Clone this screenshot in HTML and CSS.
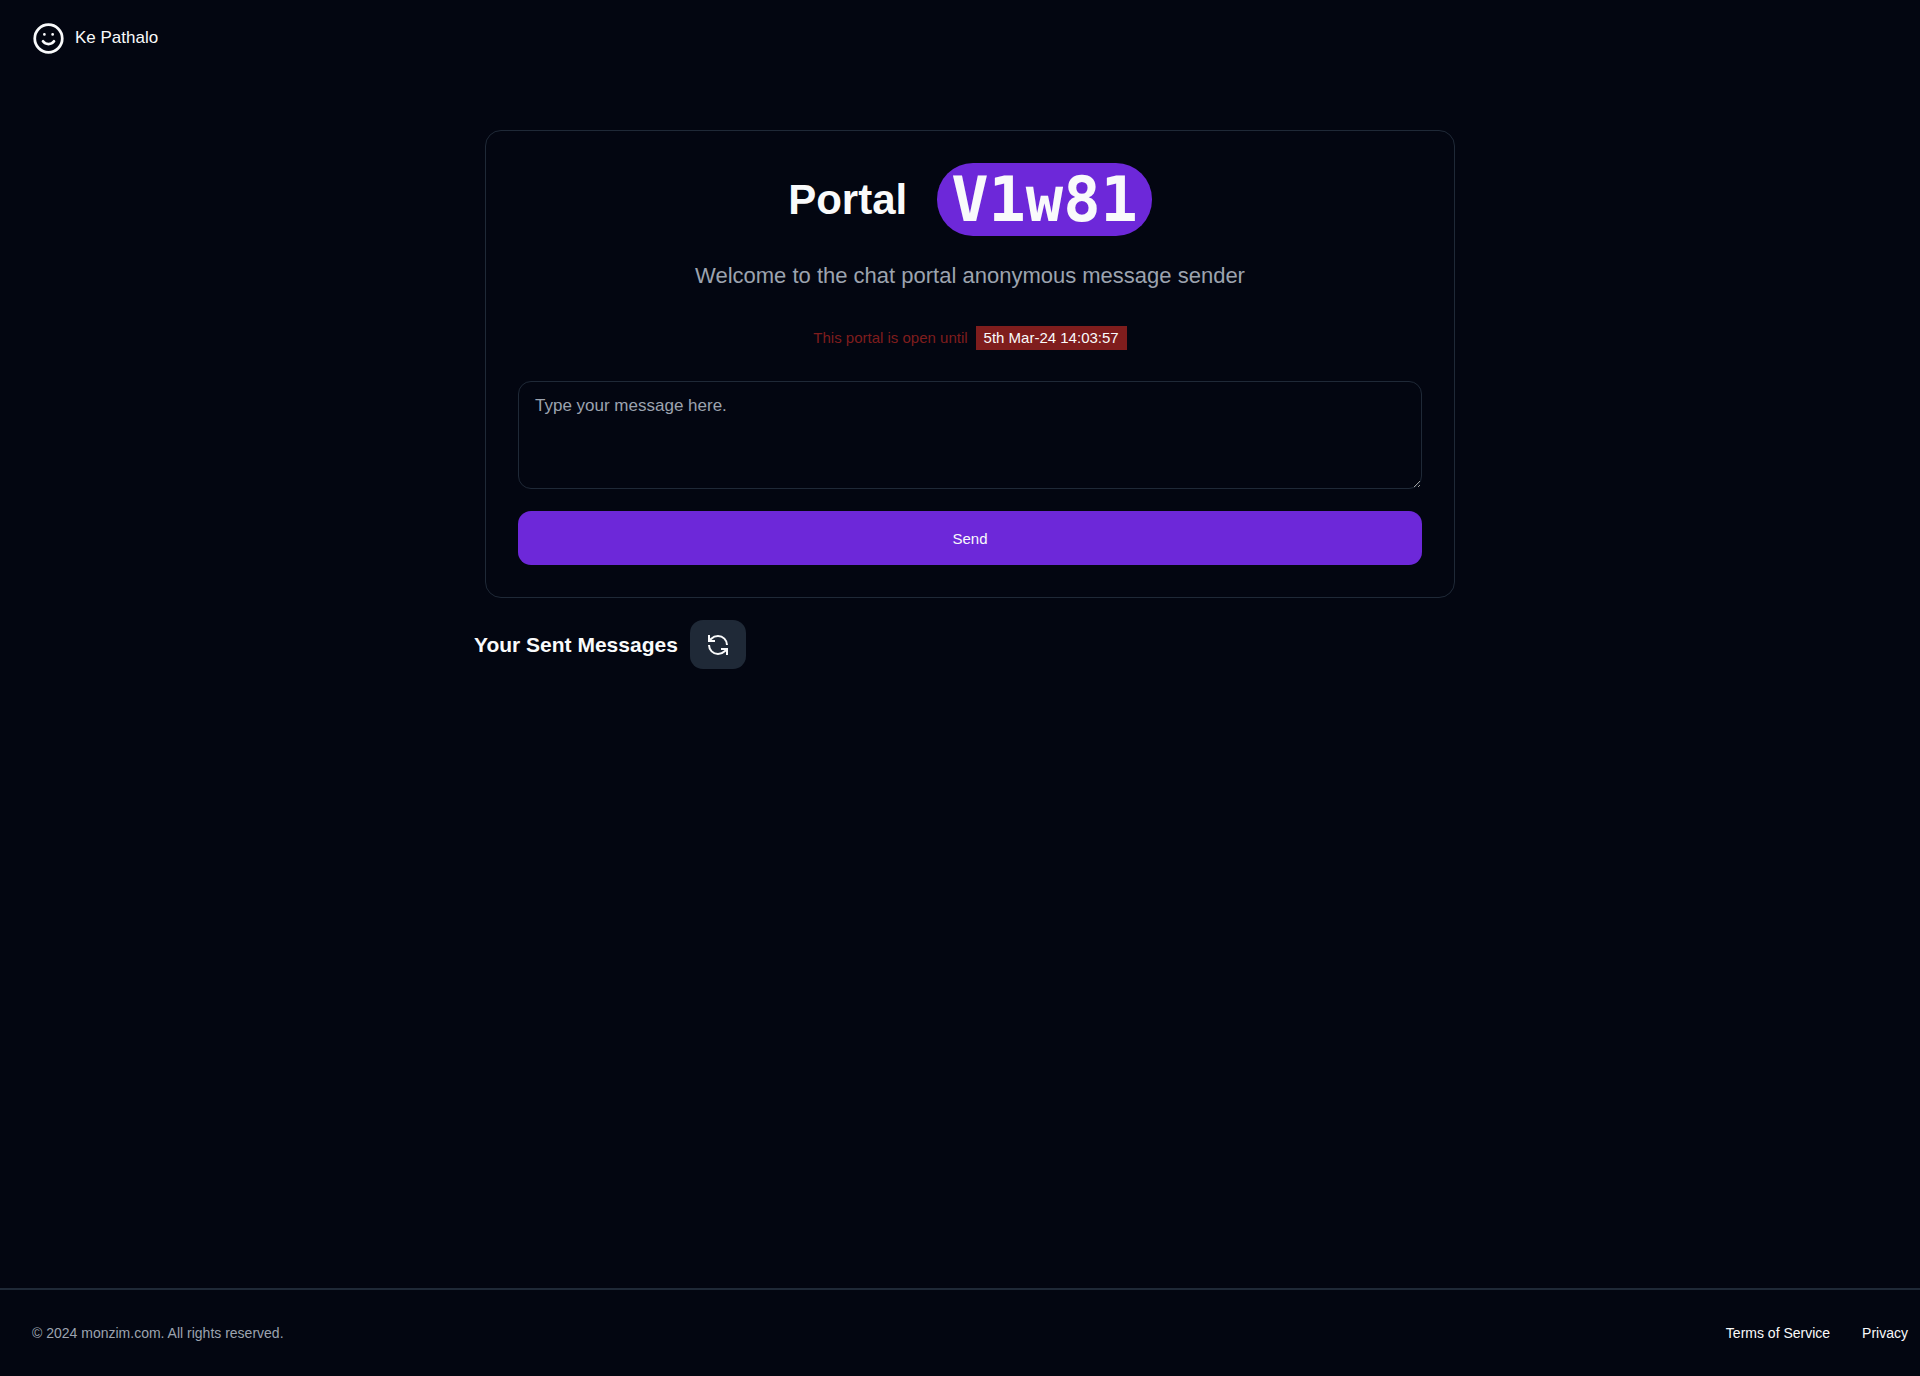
FILE: index.html
```html
<!DOCTYPE html>
<html lang="en">
<head>
  <meta charset="UTF-8">
  <meta name="viewport" content="width=device-width, initial-scale=1.0">
  <title>Ke Pathalo</title>
  <link rel="stylesheet" href="styles.css">
</head>
<body>
  <!-- Header -->
  <header class="header">
    <a class="brand" href="#">
      <svg class="brand-icon" viewBox="0 0 24 24" fill="none" stroke="currentColor" stroke-width="2" stroke-linecap="round" stroke-linejoin="round" aria-hidden="true">
        <circle cx="12" cy="12" r="10"/>
        <path d="M8 14s1.5 2 4 2 4-2 4-2"/>
        <path d="M9 9h.01M15 9h.01"/>
      </svg>
      <span>Ke Pathalo</span>
    </a>
  </header>

  <main class="main">
    <!-- Message form -->
    <section class="card">
      <h1 class="title">Portal <span class="portal-id">V1w81</span></h1>
      <p class="subtitle">Welcome to the chat portal anonymous message sender</p>
      <p class="expiry">This portal is open until <time class="date" datetime="2024-03-05T14:03:57">5th Mar-24 14:03:57</time></p>
      <form class="form">
        <textarea class="message" aria-label="Message" placeholder="Type your message here."></textarea>
        <button class="send" type="button">Send</button>
      </form>
    </section>

    <!-- Sent messages -->
    <section class="sent">
      <h2 class="sent-title">Your Sent Messages</h2>
      <button class="refresh" type="button" aria-label="Refresh">
        <svg viewBox="0 0 24 24" fill="none" stroke="currentColor" stroke-width="2" stroke-linecap="butt" aria-hidden="true">
          <path d="M21 12a9 9 0 0 0-9-9 9.75 9.75 0 0 0-6.74 2.74L3 8"/>
          <path d="M3 2v6h6"/>
          <path d="M3 12a9 9 0 0 0 9 9 9.75 9.75 0 0 0 6.74-2.74L21 16"/>
          <path d="M15 16h6v6"/>
        </svg>
      </button>
    </section>
  </main>

  <!-- Footer -->
  <footer class="footer">
    <p class="copyright">© 2024 monzim.com. All rights reserved.</p>
    <nav class="footer-links">
      <a href="#">Terms of Service</a>
      <a href="#">Privacy</a>
    </nav>
  </footer>
</body>
</html>
```

FILE: styles.css
```css
* {
  box-sizing: border-box;
}
body {
  font-family: "Liberation Sans", Arial, sans-serif;
  margin: 0;
  min-height: 100vh;
  display: flex;
  flex-direction: column;
  background-color: #030611;
  color: #f9fafb;
}
h1, h2, p {
  margin: 0;
}
a {
  color: inherit;
  text-decoration: none;
}
button {
  font-family: inherit;
  color: inherit;
  border: none;
  cursor: pointer;
}

/* Header */
.header {
  padding: 20px 32px;
}
.brand {
  display: flex;
  align-items: center;
  gap: 10px;
  height: 36px;
  font-size: 17px;
}
.brand-icon {
  width: 33px;
  height: 33px;
}

/* Main */
.main {
  flex: 1;
  padding: 54px 0 0 20px;
  width: 100%;
  max-width: 1012px;
  margin: 0 auto;
}
.card {
  margin: 0 11px;
  padding: 32px;
  border: 1px solid #1f2937;
  border-radius: 16px;
  text-align: center;
}
.title {
  display: flex;
  justify-content: center;
  align-items: center;
  gap: 30px;
  font-size: 42px;
  line-height: 73px;
}
.portal-id {
  padding: 0 14px;
  border-radius: 36px;
  background-color: #6d28d9;
  font-family: "DejaVu Sans Mono", monospace;
  font-size: 62px;
}
.subtitle {
  margin-top: 20px;
  font-size: 22px;
  line-height: 40px;
  color: #9ca3af;
}
.expiry {
  margin-top: 30px;
  display: flex;
  justify-content: center;
  align-items: center;
  gap: 8px;
  font-size: 15px;
  line-height: 24px;
  color: #7f1d1d;
}
.date {
  padding: 0 8px;
  background-color: #7f1d1d;
  color: #f9fafb;
}
.form {
  margin-top: 31px;
  display: flex;
  flex-direction: column;
  gap: 22px;
}
.message {
  width: 100%;
  height: 108px;
  padding: 10px 16px;
  border: 1px solid #1f2937;
  border-radius: 13px;
  background-color: transparent;
  color: inherit;
  font-family: inherit;
  font-size: 17px;
  line-height: 28px;
  resize: vertical;
}
.message::placeholder {
  color: #9ca3af;
}
.send {
  height: 54px;
  border-radius: 13px;
  background-color: #6d28d9;
  font-size: 15px;
}

/* Sent messages */
.sent {
  margin-top: 22px;
  display: flex;
  align-items: center;
  gap: 12px;
}
.sent-title {
  font-size: 21px;
  line-height: 40px;
}
.refresh {
  display: flex;
  justify-content: center;
  align-items: center;
  width: 56px;
  height: 49px;
  padding: 0;
  border-radius: 13px;
  background-color: #1f2937;
}
.refresh svg {
  width: 24px;
  height: 24px;
}

/* Footer */
.footer {
  display: flex;
  justify-content: space-between;
  align-items: center;
  height: 88px;
  padding: 0 12px 0 32px;
  border-top: 2px solid #1f2937;
  font-size: 14px;
}
.copyright {
  color: #9ca3af;
}
.footer-links {
  display: flex;
  gap: 32px;
}
```
